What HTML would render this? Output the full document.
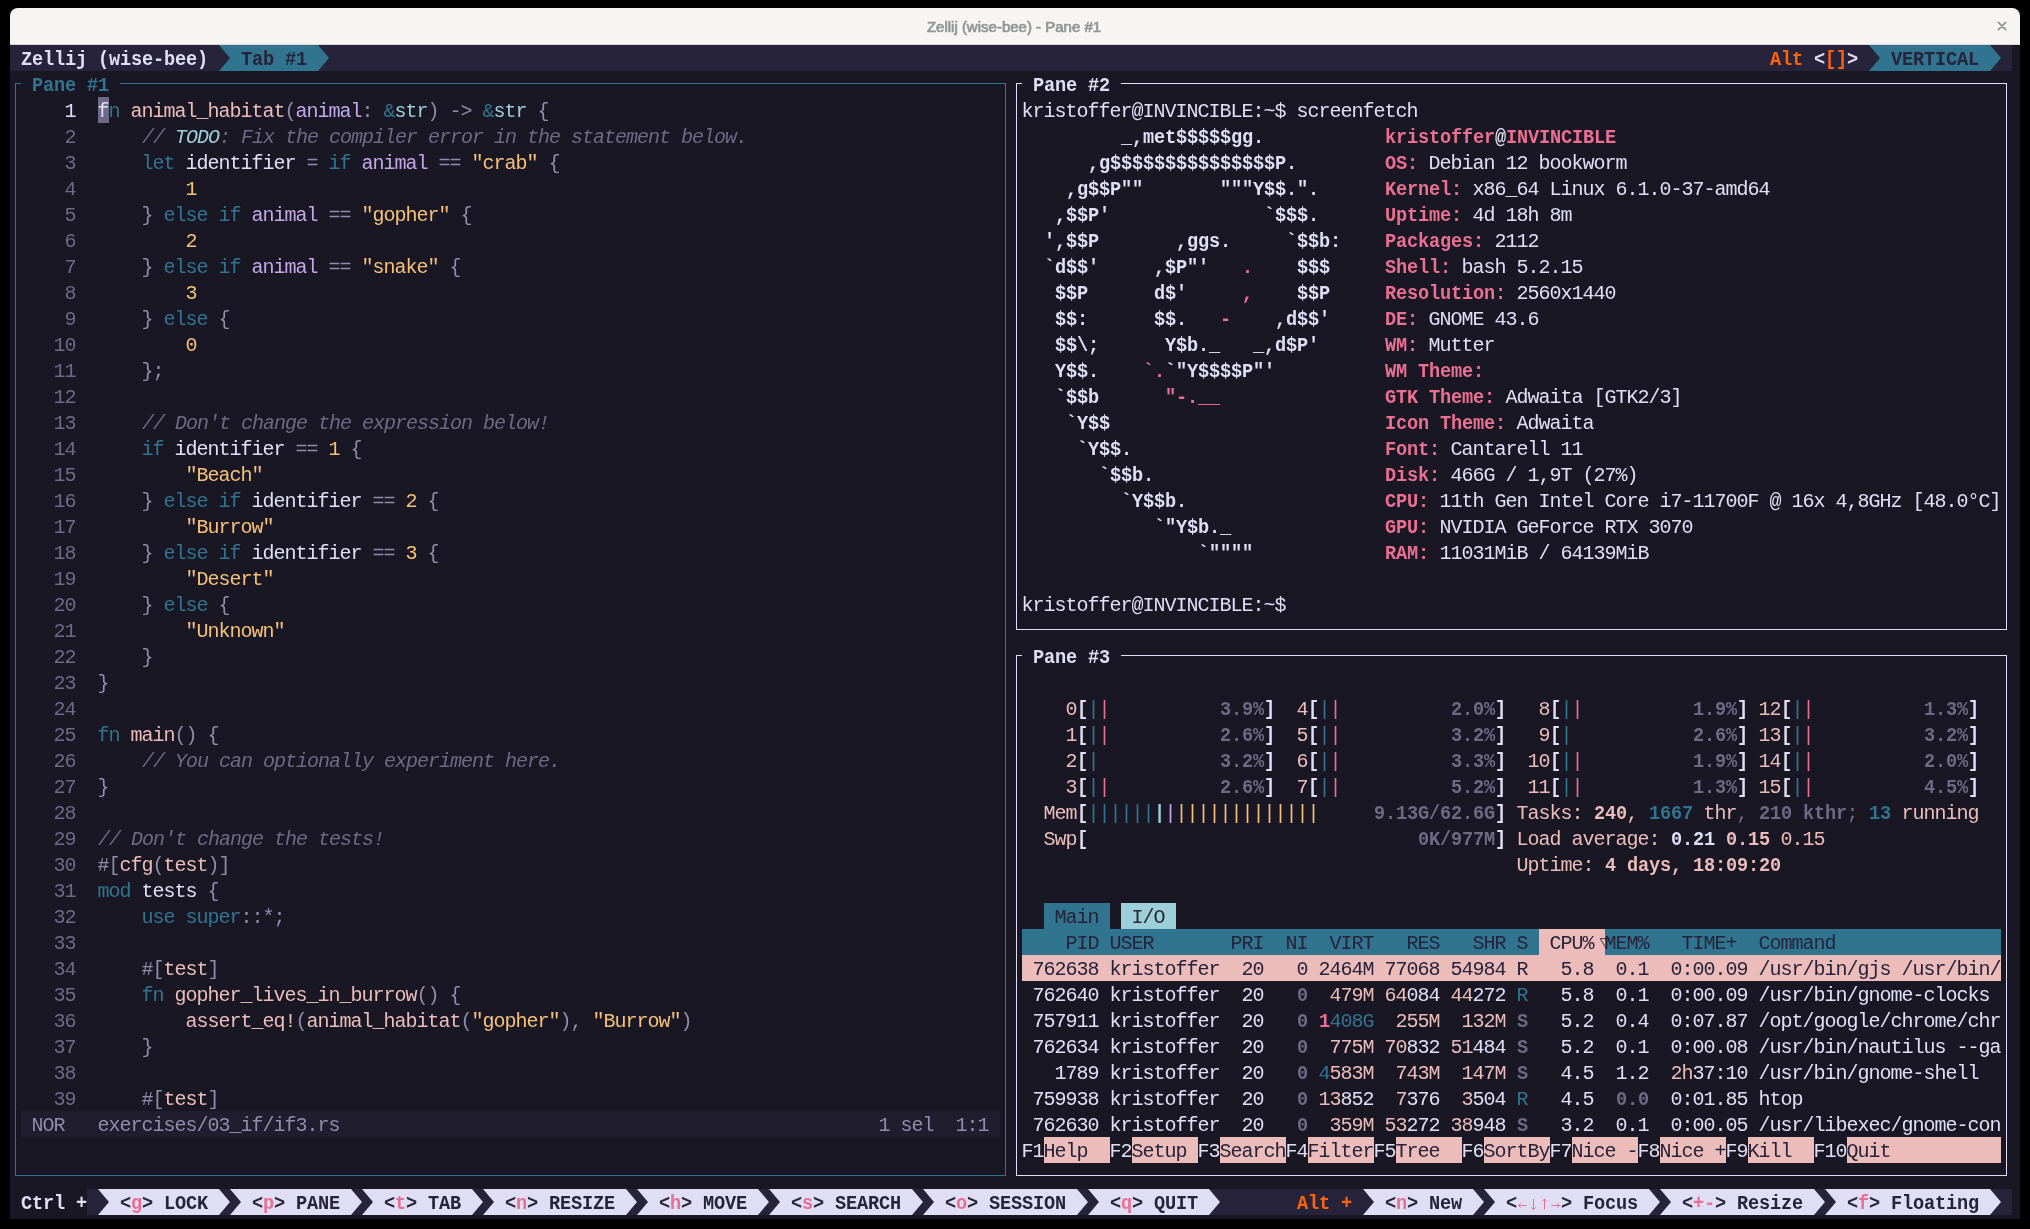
<!DOCTYPE html>
<html><head><meta charset="utf-8"><title>Zellij (wise-bee) - Pane #1</title>
<style>
html,body{margin:0;padding:0;background:#000;}
body{width:2030px;height:1229px;position:relative;overflow:hidden;font-family:"Liberation Mono",monospace;}
#win{position:absolute;left:10px;top:8px;width:2010px;height:1211px;background:#191724;border-radius:8px 8px 0 0;overflow:hidden;}
#tb{position:absolute;left:0;top:0;width:2010px;height:36px;background:#f6f5f4;border-bottom:1px solid #dcd8d1;}
#tt{position:absolute;left:-1px;top:-0.5px;width:2010px;height:37px;line-height:37px;text-align:center;font-family:"Liberation Sans",sans-serif;font-weight:normal;font-size:15px;color:#929595;-webkit-text-stroke:0.7px #929595;will-change:transform;}
#g{position:absolute;left:0;top:0;width:2030px;height:1229px;will-change:transform;}
.r{position:absolute;left:0;height:26px;width:2030px;}
.r span,.r i,.r b{position:absolute;top:2.0px;height:26px;line-height:26px;font-size:20.0px;letter-spacing:-1.0020px;white-space:pre;font-style:normal;font-weight:normal;}
.r b{font-weight:bold;font-size:20.0px;transform:scaleX(0.93);transform-origin:0 0;letter-spacing:-0.1740px;}
.r i{font-style:italic;}
.k{position:absolute;height:26px;}
.a,.l{position:absolute;display:block;}
</style></head><body>
<div id="win"><div id="tb"></div><div id="tt">Zellij (wise-bee) - Pane #1</div><svg style="position:absolute;left:1986px;top:12px" width="12" height="12" viewBox="0 0 12 12"><path d="M2.4 2.4L9.6 9.6M9.6 2.4L2.4 9.6" stroke="#929595" stroke-width="1.8" stroke-linecap="round" fill="none"/></svg></div>
<div id="g">
<div class="k" style="left:10px;top:45px;width:2002px;background:#26233a"></div><div class="k" style="left:230px;top:45px;width:88px;background:#31748f"></div><div class="k" style="left:1880px;top:45px;width:110px;background:#31748f"></div><div class="k" style="left:98px;top:97px;width:11px;background:#6e6a86"></div><div class="k" style="left:21px;top:1111px;width:979px;background:#1f1d2e"></div><div class="k" style="left:1044px;top:903px;width:66px;background:#31748f"></div><div class="k" style="left:1121px;top:903px;width:55px;background:#9ccfd8"></div><div class="k" style="left:1022px;top:929px;width:979px;background:#31748f"></div><div class="k" style="left:1539px;top:929px;width:66px;background:#ebbcba"></div><div class="k" style="left:1022px;top:955px;width:979px;background:#ebbcba"></div><div class="k" style="left:1044px;top:1137px;width:66px;background:#ebbcba"></div><div class="k" style="left:1132px;top:1137px;width:66px;background:#ebbcba"></div><div class="k" style="left:1220px;top:1137px;width:66px;background:#ebbcba"></div><div class="k" style="left:1308px;top:1137px;width:66px;background:#ebbcba"></div><div class="k" style="left:1396px;top:1137px;width:66px;background:#ebbcba"></div><div class="k" style="left:1484px;top:1137px;width:66px;background:#ebbcba"></div><div class="k" style="left:1572px;top:1137px;width:66px;background:#ebbcba"></div><div class="k" style="left:1660px;top:1137px;width:66px;background:#ebbcba"></div><div class="k" style="left:1748px;top:1137px;width:66px;background:#ebbcba"></div><div class="k" style="left:1847px;top:1137px;width:154px;background:#ebbcba"></div><div class="k" style="left:87px;top:1189px;width:1925px;background:#26233a"></div><div class="k" style="left:109px;top:1189px;width:110px;background:#e0def4"></div><div class="k" style="left:241px;top:1189px;width:110px;background:#e0def4"></div><div class="k" style="left:373px;top:1189px;width:99px;background:#e0def4"></div><div class="k" style="left:494px;top:1189px;width:132px;background:#e0def4"></div><div class="k" style="left:648px;top:1189px;width:110px;background:#e0def4"></div><div class="k" style="left:780px;top:1189px;width:132px;background:#e0def4"></div><div class="k" style="left:934px;top:1189px;width:143px;background:#e0def4"></div><div class="k" style="left:1099px;top:1189px;width:110px;background:#e0def4"></div><div class="k" style="left:1374px;top:1189px;width:99px;background:#e0def4"></div><div class="k" style="left:1495px;top:1189px;width:154px;background:#e0def4"></div><div class="k" style="left:1671px;top:1189px;width:143px;background:#e0def4"></div><div class="k" style="left:1836px;top:1189px;width:154px;background:#e0def4"></div>
<svg class="a" style="left:219px;top:45px" width="11" height="26" viewBox="0 0 11 26"><rect width="11" height="26" fill="#31748f"/><path d="M0 0L11 13.0L0 26Z" fill="#26233a"/></svg><svg class="a" style="left:318px;top:45px" width="11" height="26" viewBox="0 0 11 26"><rect width="11" height="26" fill="#26233a"/><path d="M0 0L11 13.0L0 26Z" fill="#31748f"/></svg><svg class="a" style="left:1869px;top:45px" width="11" height="26" viewBox="0 0 11 26"><rect width="11" height="26" fill="#31748f"/><path d="M0 0L11 13.0L0 26Z" fill="#26233a"/></svg><svg class="a" style="left:1990px;top:45px" width="11" height="26" viewBox="0 0 11 26"><rect width="11" height="26" fill="#26233a"/><path d="M0 0L11 13.0L0 26Z" fill="#31748f"/></svg><div class="l" style="left:15px;top:83px;width:6px;height:1px;background:#31748f"></div><div class="l" style="left:120px;top:83px;width:886px;height:1px;background:#31748f"></div><div class="l" style="left:15px;top:1175px;width:991px;height:1px;background:#31748f"></div><div class="l" style="left:15px;top:83px;width:1px;height:1093px;background:#31748f"></div><div class="l" style="left:1005px;top:83px;width:1px;height:1093px;background:#31748f"></div><div class="l" style="left:1016px;top:83px;width:6px;height:1px;background:#e0def4"></div><div class="l" style="left:1121px;top:83px;width:886px;height:1px;background:#e0def4"></div><div class="l" style="left:1016px;top:629px;width:991px;height:1px;background:#e0def4"></div><div class="l" style="left:1016px;top:83px;width:1px;height:547px;background:#e0def4"></div><div class="l" style="left:2006px;top:83px;width:1px;height:547px;background:#e0def4"></div><div class="l" style="left:1016px;top:655px;width:6px;height:1px;background:#e0def4"></div><div class="l" style="left:1121px;top:655px;width:886px;height:1px;background:#e0def4"></div><div class="l" style="left:1016px;top:1175px;width:991px;height:1px;background:#e0def4"></div><div class="l" style="left:1016px;top:655px;width:1px;height:521px;background:#e0def4"></div><div class="l" style="left:2006px;top:655px;width:1px;height:521px;background:#e0def4"></div><svg class="a" style="left:98px;top:1189px" width="11" height="26" viewBox="0 0 11 26"><rect width="11" height="26" fill="#e0def4"/><path d="M0 0L11 13.0L0 26Z" fill="#26233a"/></svg><svg class="a" style="left:219px;top:1189px" width="11" height="26" viewBox="0 0 11 26"><rect width="11" height="26" fill="#26233a"/><path d="M0 0L11 13.0L0 26Z" fill="#e0def4"/></svg><svg class="a" style="left:230px;top:1189px" width="11" height="26" viewBox="0 0 11 26"><rect width="11" height="26" fill="#e0def4"/><path d="M0 0L11 13.0L0 26Z" fill="#26233a"/></svg><svg class="a" style="left:351px;top:1189px" width="11" height="26" viewBox="0 0 11 26"><rect width="11" height="26" fill="#26233a"/><path d="M0 0L11 13.0L0 26Z" fill="#e0def4"/></svg><svg class="a" style="left:362px;top:1189px" width="11" height="26" viewBox="0 0 11 26"><rect width="11" height="26" fill="#e0def4"/><path d="M0 0L11 13.0L0 26Z" fill="#26233a"/></svg><svg class="a" style="left:472px;top:1189px" width="11" height="26" viewBox="0 0 11 26"><rect width="11" height="26" fill="#26233a"/><path d="M0 0L11 13.0L0 26Z" fill="#e0def4"/></svg><svg class="a" style="left:483px;top:1189px" width="11" height="26" viewBox="0 0 11 26"><rect width="11" height="26" fill="#e0def4"/><path d="M0 0L11 13.0L0 26Z" fill="#26233a"/></svg><svg class="a" style="left:626px;top:1189px" width="11" height="26" viewBox="0 0 11 26"><rect width="11" height="26" fill="#26233a"/><path d="M0 0L11 13.0L0 26Z" fill="#e0def4"/></svg><svg class="a" style="left:637px;top:1189px" width="11" height="26" viewBox="0 0 11 26"><rect width="11" height="26" fill="#e0def4"/><path d="M0 0L11 13.0L0 26Z" fill="#26233a"/></svg><svg class="a" style="left:758px;top:1189px" width="11" height="26" viewBox="0 0 11 26"><rect width="11" height="26" fill="#26233a"/><path d="M0 0L11 13.0L0 26Z" fill="#e0def4"/></svg><svg class="a" style="left:769px;top:1189px" width="11" height="26" viewBox="0 0 11 26"><rect width="11" height="26" fill="#e0def4"/><path d="M0 0L11 13.0L0 26Z" fill="#26233a"/></svg><svg class="a" style="left:912px;top:1189px" width="11" height="26" viewBox="0 0 11 26"><rect width="11" height="26" fill="#26233a"/><path d="M0 0L11 13.0L0 26Z" fill="#e0def4"/></svg><svg class="a" style="left:923px;top:1189px" width="11" height="26" viewBox="0 0 11 26"><rect width="11" height="26" fill="#e0def4"/><path d="M0 0L11 13.0L0 26Z" fill="#26233a"/></svg><svg class="a" style="left:1077px;top:1189px" width="11" height="26" viewBox="0 0 11 26"><rect width="11" height="26" fill="#26233a"/><path d="M0 0L11 13.0L0 26Z" fill="#e0def4"/></svg><svg class="a" style="left:1088px;top:1189px" width="11" height="26" viewBox="0 0 11 26"><rect width="11" height="26" fill="#e0def4"/><path d="M0 0L11 13.0L0 26Z" fill="#26233a"/></svg><svg class="a" style="left:1209px;top:1189px" width="11" height="26" viewBox="0 0 11 26"><rect width="11" height="26" fill="#26233a"/><path d="M0 0L11 13.0L0 26Z" fill="#e0def4"/></svg><svg class="a" style="left:1363px;top:1189px" width="11" height="26" viewBox="0 0 11 26"><rect width="11" height="26" fill="#e0def4"/><path d="M0 0L11 13.0L0 26Z" fill="#26233a"/></svg><svg class="a" style="left:1473px;top:1189px" width="11" height="26" viewBox="0 0 11 26"><rect width="11" height="26" fill="#26233a"/><path d="M0 0L11 13.0L0 26Z" fill="#e0def4"/></svg><svg class="a" style="left:1484px;top:1189px" width="11" height="26" viewBox="0 0 11 26"><rect width="11" height="26" fill="#e0def4"/><path d="M0 0L11 13.0L0 26Z" fill="#26233a"/></svg><svg class="a" style="left:1517px;top:1189px" width="11" height="26" viewBox="0 0 11 26"><path d="M9.5 16.5H1.5M3.8 14.2L1.5 16.5L3.8 18.8" fill="none" stroke="#eb6f92" stroke-width="1"/></svg><svg class="a" style="left:1528px;top:1189px" width="11" height="26" viewBox="0 0 11 26"><path d="M5.5 10V20.5M3.2 18.2L5.5 20.5L7.8 18.2" fill="none" stroke="#eb6f92" stroke-width="1"/></svg><svg class="a" style="left:1539px;top:1189px" width="11" height="26" viewBox="0 0 11 26"><path d="M5.5 20.5V10M3.2 12.3L5.5 10L7.8 12.3" fill="none" stroke="#eb6f92" stroke-width="1"/></svg><svg class="a" style="left:1550px;top:1189px" width="11" height="26" viewBox="0 0 11 26"><path d="M1.5 16.5H9.5M7.2 14.2L9.5 16.5L7.2 18.8" fill="none" stroke="#eb6f92" stroke-width="1"/></svg><svg class="a" style="left:1649px;top:1189px" width="11" height="26" viewBox="0 0 11 26"><rect width="11" height="26" fill="#26233a"/><path d="M0 0L11 13.0L0 26Z" fill="#e0def4"/></svg><svg class="a" style="left:1660px;top:1189px" width="11" height="26" viewBox="0 0 11 26"><rect width="11" height="26" fill="#e0def4"/><path d="M0 0L11 13.0L0 26Z" fill="#26233a"/></svg><svg class="a" style="left:1814px;top:1189px" width="11" height="26" viewBox="0 0 11 26"><rect width="11" height="26" fill="#26233a"/><path d="M0 0L11 13.0L0 26Z" fill="#e0def4"/></svg><svg class="a" style="left:1825px;top:1189px" width="11" height="26" viewBox="0 0 11 26"><rect width="11" height="26" fill="#e0def4"/><path d="M0 0L11 13.0L0 26Z" fill="#26233a"/></svg><svg class="a" style="left:1990px;top:1189px" width="11" height="26" viewBox="0 0 11 26"><rect width="11" height="26" fill="#26233a"/><path d="M0 0L11 13.0L0 26Z" fill="#e0def4"/></svg>
<div class="r" style="top:45px"><b style="left:20.92px;color:#e0def4">Zellij</b><b style="left:97.92px;color:#e0def4">(wise-bee)</b><b style="left:240.92px;color:#26233a">Tab</b><b style="left:284.92px;color:#26233a">#1</b><b style="left:1769.92px;color:#fe640b">Alt</b><b style="left:1813.92px;color:#e0def4">&lt;</b><b style="left:1824.92px;color:#fe640b">[]</b><b style="left:1846.92px;color:#e0def4">&gt;</b><b style="left:1890.92px;color:#26233a">VERTICAL</b></div>
<div class="r" style="top:71px"><b style="left:31.92px;color:#31748f">Pane</b><b style="left:86.92px;color:#31748f">#1</b><b style="left:1032.92px;color:#e0def4">Pane</b><b style="left:1087.92px;color:#e0def4">#2</b></div>
<div class="r" style="top:97px"><span style="left:64.50px;color:#e0def4">1</span><span style="left:97.50px;color:#e0def4">f</span><span style="left:108.50px;color:#31748f">n</span><span style="left:130.50px;color:#ebbcba">animal_habitat</span><span style="left:284.50px;color:#908caa">(</span><span style="left:295.50px;color:#c4a7e7">animal</span><span style="left:361.50px;color:#908caa">:</span><span style="left:383.50px;color:#31748f">&amp;</span><span style="left:394.50px;color:#9ccfd8">str</span><span style="left:427.50px;color:#908caa">)</span><span style="left:449.50px;color:#908caa">-&gt;</span><span style="left:482.50px;color:#31748f">&amp;</span><span style="left:493.50px;color:#9ccfd8">str</span><span style="left:537.50px;color:#908caa">{</span><span style="left:1021.50px;color:#e0def4">kristoffer@INVINCIBLE:~$</span><span style="left:1296.50px;color:#e0def4">screenfetch</span></div>
<div class="r" style="top:123px"><span style="left:64.50px;color:#6e6a86">2</span><i style="left:142.00px;color:#6e6a86">//</i><i style="left:175.00px;color:#9ccfd8">TODO</i><i style="left:219.00px;color:#6e6a86">:</i><i style="left:241.00px;color:#6e6a86">Fix</i><i style="left:285.00px;color:#6e6a86">the</i><i style="left:329.00px;color:#6e6a86">compiler</i><i style="left:428.00px;color:#6e6a86">error</i><i style="left:494.00px;color:#6e6a86">in</i><i style="left:527.00px;color:#6e6a86">the</i><i style="left:571.00px;color:#6e6a86">statement</i><i style="left:681.00px;color:#6e6a86">below.</i><b style="left:1120.92px;color:#e0def4">_,met$$$$$gg.</b><b style="left:1384.92px;color:#eb6f92">kristoffer</b><b style="left:1494.92px;color:#e0def4">@</b><b style="left:1505.92px;color:#eb6f92">INVINCIBLE</b></div>
<div class="r" style="top:149px"><span style="left:64.50px;color:#6e6a86">3</span><span style="left:141.50px;color:#31748f">let</span><span style="left:185.50px;color:#e0def4">identifier</span><span style="left:306.50px;color:#908caa">=</span><span style="left:328.50px;color:#31748f">if</span><span style="left:361.50px;color:#c4a7e7">animal</span><span style="left:438.50px;color:#908caa">==</span><span style="left:471.50px;color:#f6c177">"crab"</span><span style="left:548.50px;color:#908caa">{</span><b style="left:1087.92px;color:#e0def4">,g$$$$$$$$$$$$$$$P.</b><b style="left:1384.92px;color:#eb6f92">OS:</b><span style="left:1428.50px;color:#e0def4">Debian</span><span style="left:1505.50px;color:#e0def4">12</span><span style="left:1538.50px;color:#e0def4">bookworm</span></div>
<div class="r" style="top:175px"><span style="left:64.50px;color:#6e6a86">4</span><span style="left:185.50px;color:#f6c177">1</span><b style="left:1065.92px;color:#e0def4">,g$$P""</b><b style="left:1219.92px;color:#e0def4">"""Y$$.".</b><b style="left:1384.92px;color:#eb6f92">Kernel:</b><span style="left:1472.50px;color:#e0def4">x86_64</span><span style="left:1549.50px;color:#e0def4">Linux</span><span style="left:1615.50px;color:#e0def4">6.1.0-37-amd64</span></div>
<div class="r" style="top:201px"><span style="left:64.50px;color:#6e6a86">5</span><span style="left:141.50px;color:#908caa">}</span><span style="left:163.50px;color:#31748f">else</span><span style="left:218.50px;color:#31748f">if</span><span style="left:251.50px;color:#c4a7e7">animal</span><span style="left:328.50px;color:#908caa">==</span><span style="left:361.50px;color:#f6c177">"gopher"</span><span style="left:460.50px;color:#908caa">{</span><b style="left:1054.92px;color:#e0def4">,$$P'</b><b style="left:1263.92px;color:#e0def4">`$$$.</b><b style="left:1384.92px;color:#eb6f92">Uptime:</b><span style="left:1472.50px;color:#e0def4">4d</span><span style="left:1505.50px;color:#e0def4">18h</span><span style="left:1549.50px;color:#e0def4">8m</span></div>
<div class="r" style="top:227px"><span style="left:64.50px;color:#6e6a86">6</span><span style="left:185.50px;color:#f6c177">2</span><b style="left:1043.92px;color:#e0def4">',$$P</b><b style="left:1175.92px;color:#e0def4">,ggs.</b><b style="left:1285.92px;color:#e0def4">`$$b:</b><b style="left:1384.92px;color:#eb6f92">Packages:</b><span style="left:1494.50px;color:#e0def4">2112</span></div>
<div class="r" style="top:253px"><span style="left:64.50px;color:#6e6a86">7</span><span style="left:141.50px;color:#908caa">}</span><span style="left:163.50px;color:#31748f">else</span><span style="left:218.50px;color:#31748f">if</span><span style="left:251.50px;color:#c4a7e7">animal</span><span style="left:328.50px;color:#908caa">==</span><span style="left:361.50px;color:#f6c177">"snake"</span><span style="left:449.50px;color:#908caa">{</span><b style="left:1043.92px;color:#e0def4">`d$$'</b><b style="left:1153.92px;color:#e0def4">,$P"'</b><b style="left:1241.92px;color:#eb6f92">.</b><b style="left:1296.92px;color:#e0def4">$$$</b><b style="left:1384.92px;color:#eb6f92">Shell:</b><span style="left:1461.50px;color:#e0def4">bash</span><span style="left:1516.50px;color:#e0def4">5.2.15</span></div>
<div class="r" style="top:279px"><span style="left:64.50px;color:#6e6a86">8</span><span style="left:185.50px;color:#f6c177">3</span><b style="left:1054.92px;color:#e0def4">$$P</b><b style="left:1153.92px;color:#e0def4">d$'</b><b style="left:1241.92px;color:#eb6f92">,</b><b style="left:1296.92px;color:#e0def4">$$P</b><b style="left:1384.92px;color:#eb6f92">Resolution:</b><span style="left:1516.50px;color:#e0def4">2560x1440</span></div>
<div class="r" style="top:305px"><span style="left:64.50px;color:#6e6a86">9</span><span style="left:141.50px;color:#908caa">}</span><span style="left:163.50px;color:#31748f">else</span><span style="left:218.50px;color:#908caa">{</span><b style="left:1054.92px;color:#e0def4">$$:</b><b style="left:1153.92px;color:#e0def4">$$.</b><b style="left:1219.92px;color:#eb6f92">-</b><b style="left:1274.92px;color:#e0def4">,d$$'</b><b style="left:1384.92px;color:#eb6f92">DE:</b><span style="left:1428.50px;color:#e0def4">GNOME</span><span style="left:1494.50px;color:#e0def4">43.6</span></div>
<div class="r" style="top:331px"><span style="left:53.50px;color:#6e6a86">10</span><span style="left:185.50px;color:#f6c177">0</span><b style="left:1054.92px;color:#e0def4">$$\;</b><b style="left:1164.92px;color:#e0def4">Y$b._</b><b style="left:1252.92px;color:#e0def4">_,d$P'</b><b style="left:1384.92px;color:#eb6f92">WM:</b><span style="left:1428.50px;color:#e0def4">Mutter</span></div>
<div class="r" style="top:357px"><span style="left:53.50px;color:#6e6a86">11</span><span style="left:141.50px;color:#908caa">};</span><b style="left:1054.92px;color:#e0def4">Y$$.</b><b style="left:1142.92px;color:#eb6f92">`.</b><b style="left:1164.92px;color:#e0def4">`"Y$$$$P"'</b><b style="left:1384.92px;color:#eb6f92">WM</b><b style="left:1417.92px;color:#eb6f92">Theme:</b></div>
<div class="r" style="top:383px"><span style="left:53.50px;color:#6e6a86">12</span><b style="left:1054.92px;color:#e0def4">`$$b</b><b style="left:1164.92px;color:#eb6f92">"-.__</b><b style="left:1384.92px;color:#eb6f92">GTK</b><b style="left:1428.92px;color:#eb6f92">Theme:</b><span style="left:1505.50px;color:#e0def4">Adwaita</span><span style="left:1593.50px;color:#e0def4">[GTK2/3]</span></div>
<div class="r" style="top:409px"><span style="left:53.50px;color:#6e6a86">13</span><i style="left:142.00px;color:#6e6a86">//</i><i style="left:175.00px;color:#6e6a86">Don't</i><i style="left:241.00px;color:#6e6a86">change</i><i style="left:318.00px;color:#6e6a86">the</i><i style="left:362.00px;color:#6e6a86">expression</i><i style="left:483.00px;color:#6e6a86">below!</i><b style="left:1065.92px;color:#e0def4">`Y$$</b><b style="left:1384.92px;color:#eb6f92">Icon</b><b style="left:1439.92px;color:#eb6f92">Theme:</b><span style="left:1516.50px;color:#e0def4">Adwaita</span></div>
<div class="r" style="top:435px"><span style="left:53.50px;color:#6e6a86">14</span><span style="left:141.50px;color:#31748f">if</span><span style="left:174.50px;color:#e0def4">identifier</span><span style="left:295.50px;color:#908caa">==</span><span style="left:328.50px;color:#f6c177">1</span><span style="left:350.50px;color:#908caa">{</span><b style="left:1076.92px;color:#e0def4">`Y$$.</b><b style="left:1384.92px;color:#eb6f92">Font:</b><span style="left:1450.50px;color:#e0def4">Cantarell</span><span style="left:1560.50px;color:#e0def4">11</span></div>
<div class="r" style="top:461px"><span style="left:53.50px;color:#6e6a86">15</span><span style="left:185.50px;color:#f6c177">"Beach"</span><b style="left:1098.92px;color:#e0def4">`$$b.</b><b style="left:1384.92px;color:#eb6f92">Disk:</b><span style="left:1450.50px;color:#e0def4">466G</span><span style="left:1505.50px;color:#e0def4">/</span><span style="left:1527.50px;color:#e0def4">1,9T</span><span style="left:1582.50px;color:#e0def4">(27%)</span></div>
<div class="r" style="top:487px"><span style="left:53.50px;color:#6e6a86">16</span><span style="left:141.50px;color:#908caa">}</span><span style="left:163.50px;color:#31748f">else</span><span style="left:218.50px;color:#31748f">if</span><span style="left:251.50px;color:#e0def4">identifier</span><span style="left:372.50px;color:#908caa">==</span><span style="left:405.50px;color:#f6c177">2</span><span style="left:427.50px;color:#908caa">{</span><b style="left:1120.92px;color:#e0def4">`Y$$b.</b><b style="left:1384.92px;color:#eb6f92">CPU:</b><span style="left:1439.50px;color:#e0def4">11th</span><span style="left:1494.50px;color:#e0def4">Gen</span><span style="left:1538.50px;color:#e0def4">Intel</span><span style="left:1604.50px;color:#e0def4">Core</span><span style="left:1659.50px;color:#e0def4">i7-11700F</span><span style="left:1769.50px;color:#e0def4">@</span><span style="left:1791.50px;color:#e0def4">16x</span><span style="left:1835.50px;color:#e0def4">4,8GHz</span><span style="left:1912.50px;color:#e0def4">[48.0°C]</span></div>
<div class="r" style="top:513px"><span style="left:53.50px;color:#6e6a86">17</span><span style="left:185.50px;color:#f6c177">"Burrow"</span><b style="left:1153.92px;color:#e0def4">`"Y$b._</b><b style="left:1384.92px;color:#eb6f92">GPU:</b><span style="left:1439.50px;color:#e0def4">NVIDIA</span><span style="left:1516.50px;color:#e0def4">GeForce</span><span style="left:1604.50px;color:#e0def4">RTX</span><span style="left:1648.50px;color:#e0def4">3070</span></div>
<div class="r" style="top:539px"><span style="left:53.50px;color:#6e6a86">18</span><span style="left:141.50px;color:#908caa">}</span><span style="left:163.50px;color:#31748f">else</span><span style="left:218.50px;color:#31748f">if</span><span style="left:251.50px;color:#e0def4">identifier</span><span style="left:372.50px;color:#908caa">==</span><span style="left:405.50px;color:#f6c177">3</span><span style="left:427.50px;color:#908caa">{</span><b style="left:1197.92px;color:#e0def4">`""""</b><b style="left:1384.92px;color:#eb6f92">RAM:</b><span style="left:1439.50px;color:#e0def4">11031MiB</span><span style="left:1538.50px;color:#e0def4">/</span><span style="left:1560.50px;color:#e0def4">64139MiB</span></div>
<div class="r" style="top:565px"><span style="left:53.50px;color:#6e6a86">19</span><span style="left:185.50px;color:#f6c177">"Desert"</span></div>
<div class="r" style="top:591px"><span style="left:53.50px;color:#6e6a86">20</span><span style="left:141.50px;color:#908caa">}</span><span style="left:163.50px;color:#31748f">else</span><span style="left:218.50px;color:#908caa">{</span><span style="left:1021.50px;color:#e0def4">kristoffer@INVINCIBLE:~$</span></div>
<div class="r" style="top:617px"><span style="left:53.50px;color:#6e6a86">21</span><span style="left:185.50px;color:#f6c177">"Unknown"</span></div>
<div class="r" style="top:643px"><span style="left:53.50px;color:#6e6a86">22</span><span style="left:141.50px;color:#908caa">}</span><b style="left:1032.92px;color:#e0def4">Pane</b><b style="left:1087.92px;color:#e0def4">#3</b></div>
<div class="r" style="top:669px"><span style="left:53.50px;color:#6e6a86">23</span><span style="left:97.50px;color:#908caa">}</span></div>
<div class="r" style="top:695px"><span style="left:53.50px;color:#6e6a86">24</span><span style="left:1065.50px;color:#ebbcba">0</span><b style="left:1076.92px;color:#e0def4">[</b><span style="left:1087.50px;color:#31748f">|</span><span style="left:1098.50px;color:#eb6f92">|</span><b style="left:1219.92px;color:#6e6a86">3.9%</b><b style="left:1263.92px;color:#e0def4">]</b><span style="left:1296.50px;color:#ebbcba">4</span><b style="left:1307.92px;color:#e0def4">[</b><span style="left:1318.50px;color:#31748f">|</span><span style="left:1329.50px;color:#eb6f92">|</span><b style="left:1450.92px;color:#6e6a86">2.0%</b><b style="left:1494.92px;color:#e0def4">]</b><span style="left:1538.50px;color:#ebbcba">8</span><b style="left:1549.92px;color:#e0def4">[</b><span style="left:1560.50px;color:#31748f">|</span><span style="left:1571.50px;color:#eb6f92">|</span><b style="left:1692.92px;color:#6e6a86">1.9%</b><b style="left:1736.92px;color:#e0def4">]</b><span style="left:1758.50px;color:#ebbcba">12</span><b style="left:1780.92px;color:#e0def4">[</b><span style="left:1791.50px;color:#31748f">|</span><span style="left:1802.50px;color:#eb6f92">|</span><b style="left:1923.92px;color:#6e6a86">1.3%</b><b style="left:1967.92px;color:#e0def4">]</b></div>
<div class="r" style="top:721px"><span style="left:53.50px;color:#6e6a86">25</span><span style="left:97.50px;color:#31748f">fn</span><span style="left:130.50px;color:#ebbcba">main</span><span style="left:174.50px;color:#908caa">()</span><span style="left:207.50px;color:#908caa">{</span><span style="left:1065.50px;color:#ebbcba">1</span><b style="left:1076.92px;color:#e0def4">[</b><span style="left:1087.50px;color:#31748f">|</span><span style="left:1098.50px;color:#eb6f92">|</span><b style="left:1219.92px;color:#6e6a86">2.6%</b><b style="left:1263.92px;color:#e0def4">]</b><span style="left:1296.50px;color:#ebbcba">5</span><b style="left:1307.92px;color:#e0def4">[</b><span style="left:1318.50px;color:#31748f">|</span><span style="left:1329.50px;color:#eb6f92">|</span><b style="left:1450.92px;color:#6e6a86">3.2%</b><b style="left:1494.92px;color:#e0def4">]</b><span style="left:1538.50px;color:#ebbcba">9</span><b style="left:1549.92px;color:#e0def4">[</b><span style="left:1560.50px;color:#31748f">|</span><b style="left:1692.92px;color:#6e6a86">2.6%</b><b style="left:1736.92px;color:#e0def4">]</b><span style="left:1758.50px;color:#ebbcba">13</span><b style="left:1780.92px;color:#e0def4">[</b><span style="left:1791.50px;color:#31748f">|</span><span style="left:1802.50px;color:#eb6f92">|</span><b style="left:1923.92px;color:#6e6a86">3.2%</b><b style="left:1967.92px;color:#e0def4">]</b></div>
<div class="r" style="top:747px"><span style="left:53.50px;color:#6e6a86">26</span><i style="left:142.00px;color:#6e6a86">//</i><i style="left:175.00px;color:#6e6a86">You</i><i style="left:219.00px;color:#6e6a86">can</i><i style="left:263.00px;color:#6e6a86">optionally</i><i style="left:384.00px;color:#6e6a86">experiment</i><i style="left:505.00px;color:#6e6a86">here.</i><span style="left:1065.50px;color:#ebbcba">2</span><b style="left:1076.92px;color:#e0def4">[</b><span style="left:1087.50px;color:#31748f">|</span><b style="left:1219.92px;color:#6e6a86">3.2%</b><b style="left:1263.92px;color:#e0def4">]</b><span style="left:1296.50px;color:#ebbcba">6</span><b style="left:1307.92px;color:#e0def4">[</b><span style="left:1318.50px;color:#31748f">|</span><span style="left:1329.50px;color:#eb6f92">|</span><b style="left:1450.92px;color:#6e6a86">3.3%</b><b style="left:1494.92px;color:#e0def4">]</b><span style="left:1527.50px;color:#ebbcba">10</span><b style="left:1549.92px;color:#e0def4">[</b><span style="left:1560.50px;color:#31748f">|</span><span style="left:1571.50px;color:#eb6f92">|</span><b style="left:1692.92px;color:#6e6a86">1.9%</b><b style="left:1736.92px;color:#e0def4">]</b><span style="left:1758.50px;color:#ebbcba">14</span><b style="left:1780.92px;color:#e0def4">[</b><span style="left:1791.50px;color:#31748f">|</span><span style="left:1802.50px;color:#eb6f92">|</span><b style="left:1923.92px;color:#6e6a86">2.0%</b><b style="left:1967.92px;color:#e0def4">]</b></div>
<div class="r" style="top:773px"><span style="left:53.50px;color:#6e6a86">27</span><span style="left:97.50px;color:#908caa">}</span><span style="left:1065.50px;color:#ebbcba">3</span><b style="left:1076.92px;color:#e0def4">[</b><span style="left:1087.50px;color:#31748f">|</span><span style="left:1098.50px;color:#eb6f92">|</span><b style="left:1219.92px;color:#6e6a86">2.6%</b><b style="left:1263.92px;color:#e0def4">]</b><span style="left:1296.50px;color:#ebbcba">7</span><b style="left:1307.92px;color:#e0def4">[</b><span style="left:1318.50px;color:#31748f">|</span><span style="left:1329.50px;color:#eb6f92">|</span><b style="left:1450.92px;color:#6e6a86">5.2%</b><b style="left:1494.92px;color:#e0def4">]</b><span style="left:1527.50px;color:#ebbcba">11</span><b style="left:1549.92px;color:#e0def4">[</b><span style="left:1560.50px;color:#31748f">|</span><span style="left:1571.50px;color:#eb6f92">|</span><b style="left:1692.92px;color:#6e6a86">1.3%</b><b style="left:1736.92px;color:#e0def4">]</b><span style="left:1758.50px;color:#ebbcba">15</span><b style="left:1780.92px;color:#e0def4">[</b><span style="left:1791.50px;color:#31748f">|</span><span style="left:1802.50px;color:#eb6f92">|</span><b style="left:1923.92px;color:#6e6a86">4.5%</b><b style="left:1967.92px;color:#e0def4">]</b></div>
<div class="r" style="top:799px"><span style="left:53.50px;color:#6e6a86">28</span><span style="left:1043.50px;color:#ebbcba">Mem</span><b style="left:1076.92px;color:#e0def4">[</b><span style="left:1087.50px;color:#31748f">||||||</span><b style="left:1153.92px;color:#9ccfd8">|</b><span style="left:1164.50px;color:#c4a7e7">|</span><span style="left:1175.50px;color:#f6c177">|||||||||||||</span><b style="left:1373.92px;color:#6e6a86">9.13G/62.6G</b><b style="left:1494.92px;color:#e0def4">]</b><span style="left:1516.50px;color:#ebbcba">Tasks:</span><b style="left:1593.92px;color:#ebbcba">240</b><span style="left:1626.50px;color:#ebbcba">,</span><b style="left:1648.92px;color:#31748f">1667</b><span style="left:1703.50px;color:#ebbcba">thr</span><span style="left:1736.50px;color:#6e6a86">,</span><b style="left:1758.92px;color:#6e6a86">210</b><b style="left:1802.92px;color:#6e6a86">kthr</b><span style="left:1846.50px;color:#6e6a86">;</span><b style="left:1868.92px;color:#31748f">13</b><span style="left:1901.50px;color:#ebbcba">running</span></div>
<div class="r" style="top:825px"><span style="left:53.50px;color:#6e6a86">29</span><i style="left:98.00px;color:#6e6a86">//</i><i style="left:131.00px;color:#6e6a86">Don't</i><i style="left:197.00px;color:#6e6a86">change</i><i style="left:274.00px;color:#6e6a86">the</i><i style="left:318.00px;color:#6e6a86">tests!</i><span style="left:1043.50px;color:#ebbcba">Swp</span><b style="left:1076.92px;color:#e0def4">[</b><b style="left:1417.92px;color:#6e6a86">0K/977M</b><b style="left:1494.92px;color:#e0def4">]</b><span style="left:1516.50px;color:#ebbcba">Load</span><span style="left:1571.50px;color:#ebbcba">average:</span><b style="left:1670.92px;color:#e0def4">0.21</b><b style="left:1725.92px;color:#ebbcba">0.15</b><span style="left:1780.50px;color:#ebbcba">0.15</span></div>
<div class="r" style="top:851px"><span style="left:53.50px;color:#6e6a86">30</span><span style="left:97.50px;color:#908caa">#[</span><span style="left:119.50px;color:#ebbcba">cfg</span><span style="left:152.50px;color:#908caa">(</span><span style="left:163.50px;color:#ebbcba">test</span><span style="left:207.50px;color:#908caa">)]</span><span style="left:1516.50px;color:#ebbcba">Uptime:</span><b style="left:1604.92px;color:#ebbcba">4</b><b style="left:1626.92px;color:#ebbcba">days,</b><b style="left:1692.92px;color:#ebbcba">18:09:20</b></div>
<div class="r" style="top:877px"><span style="left:53.50px;color:#6e6a86">31</span><span style="left:97.50px;color:#31748f">mod</span><span style="left:141.50px;color:#e0def4">tests</span><span style="left:207.50px;color:#908caa">{</span></div>
<div class="r" style="top:903px"><span style="left:53.50px;color:#6e6a86">32</span><span style="left:141.50px;color:#31748f">use</span><span style="left:185.50px;color:#31748f">super</span><span style="left:240.50px;color:#908caa">::*;</span><span style="left:1054.50px;color:#26233a">Main</span><span style="left:1131.50px;color:#26233a">I/O</span></div>
<div class="r" style="top:929px"><span style="left:53.50px;color:#6e6a86">33</span><span style="left:1065.50px;color:#26233a">PID</span><span style="left:1109.50px;color:#26233a">USER</span><span style="left:1230.50px;color:#26233a">PRI</span><span style="left:1285.50px;color:#26233a">NI</span><span style="left:1329.50px;color:#26233a">VIRT</span><span style="left:1406.50px;color:#26233a">RES</span><span style="left:1472.50px;color:#26233a">SHR</span><span style="left:1516.50px;color:#26233a">S</span><span style="left:1549.50px;color:#26233a">CPU%</span><span style="left:1604.50px;color:#26233a">MEM%</span><span style="left:1681.50px;color:#26233a">TIME+</span><span style="left:1758.50px;color:#26233a">Command</span></div>
<div class="r" style="top:955px"><span style="left:53.50px;color:#6e6a86">34</span><span style="left:141.50px;color:#908caa">#[</span><span style="left:163.50px;color:#ebbcba">test</span><span style="left:207.50px;color:#908caa">]</span><span style="left:1032.50px;color:#26233a">762638</span><span style="left:1109.50px;color:#26233a">kristoffer</span><span style="left:1241.50px;color:#26233a">20</span><span style="left:1296.50px;color:#26233a">0</span><span style="left:1318.50px;color:#26233a">2464M</span><span style="left:1384.50px;color:#26233a">77068</span><span style="left:1450.50px;color:#26233a">54984</span><span style="left:1516.50px;color:#26233a">R</span><span style="left:1560.50px;color:#26233a">5.8</span><span style="left:1615.50px;color:#26233a">0.1</span><span style="left:1670.50px;color:#26233a">0:00.09</span><span style="left:1758.50px;color:#26233a">/usr/bin/gjs</span><span style="left:1901.50px;color:#26233a">/usr/bin/</span></div>
<div class="r" style="top:981px"><span style="left:53.50px;color:#6e6a86">35</span><span style="left:141.50px;color:#31748f">fn</span><span style="left:174.50px;color:#ebbcba">gopher_lives_in_burrow</span><span style="left:416.50px;color:#908caa">()</span><span style="left:449.50px;color:#908caa">{</span><span style="left:1032.50px;color:#e0def4">762640</span><span style="left:1109.50px;color:#e0def4">kristoffer</span><span style="left:1241.50px;color:#e0def4">20</span><b style="left:1296.92px;color:#6e6a86">0</b><span style="left:1329.50px;color:#ebbcba">479M</span><span style="left:1384.50px;color:#ebbcba">64</span><span style="left:1406.50px;color:#e0def4">084</span><span style="left:1450.50px;color:#ebbcba">44</span><span style="left:1472.50px;color:#e0def4">272</span><span style="left:1516.50px;color:#31748f">R</span><span style="left:1560.50px;color:#e0def4">5.8</span><span style="left:1615.50px;color:#e0def4">0.1</span><span style="left:1670.50px;color:#e0def4">0:00.09</span><span style="left:1758.50px;color:#e0def4">/usr/bin/gnome-clocks</span></div>
<div class="r" style="top:1007px"><span style="left:53.50px;color:#6e6a86">36</span><span style="left:185.50px;color:#ebbcba">assert_eq!</span><span style="left:295.50px;color:#908caa">(</span><span style="left:306.50px;color:#ebbcba">animal_habitat</span><span style="left:460.50px;color:#908caa">(</span><span style="left:471.50px;color:#f6c177">"gopher"</span><span style="left:559.50px;color:#908caa">),</span><span style="left:592.50px;color:#f6c177">"Burrow"</span><span style="left:680.50px;color:#908caa">)</span><span style="left:1032.50px;color:#e0def4">757911</span><span style="left:1109.50px;color:#e0def4">kristoffer</span><span style="left:1241.50px;color:#e0def4">20</span><b style="left:1296.92px;color:#6e6a86">0</b><b style="left:1318.92px;color:#eb6f92">1</b><span style="left:1329.50px;color:#31748f">408G</span><span style="left:1395.50px;color:#ebbcba">255M</span><span style="left:1461.50px;color:#ebbcba">132M</span><b style="left:1516.92px;color:#6e6a86">S</b><span style="left:1560.50px;color:#e0def4">5.2</span><span style="left:1615.50px;color:#e0def4">0.4</span><span style="left:1670.50px;color:#e0def4">0:07.87</span><span style="left:1758.50px;color:#e0def4">/opt/google/chrome/chr</span></div>
<div class="r" style="top:1033px"><span style="left:53.50px;color:#6e6a86">37</span><span style="left:141.50px;color:#908caa">}</span><span style="left:1032.50px;color:#e0def4">762634</span><span style="left:1109.50px;color:#e0def4">kristoffer</span><span style="left:1241.50px;color:#e0def4">20</span><b style="left:1296.92px;color:#6e6a86">0</b><span style="left:1329.50px;color:#ebbcba">775M</span><span style="left:1384.50px;color:#ebbcba">70</span><span style="left:1406.50px;color:#e0def4">832</span><span style="left:1450.50px;color:#ebbcba">51</span><span style="left:1472.50px;color:#e0def4">484</span><b style="left:1516.92px;color:#6e6a86">S</b><span style="left:1560.50px;color:#e0def4">5.2</span><span style="left:1615.50px;color:#e0def4">0.1</span><span style="left:1670.50px;color:#e0def4">0:00.08</span><span style="left:1758.50px;color:#e0def4">/usr/bin/nautilus</span><span style="left:1956.50px;color:#e0def4">--ga</span></div>
<div class="r" style="top:1059px"><span style="left:53.50px;color:#6e6a86">38</span><span style="left:1054.50px;color:#e0def4">1789</span><span style="left:1109.50px;color:#e0def4">kristoffer</span><span style="left:1241.50px;color:#e0def4">20</span><b style="left:1296.92px;color:#6e6a86">0</b><span style="left:1318.50px;color:#31748f">4</span><span style="left:1329.50px;color:#ebbcba">583M</span><span style="left:1395.50px;color:#ebbcba">743M</span><span style="left:1461.50px;color:#ebbcba">147M</span><b style="left:1516.92px;color:#6e6a86">S</b><span style="left:1560.50px;color:#e0def4">4.5</span><span style="left:1615.50px;color:#e0def4">1.2</span><span style="left:1670.50px;color:#ebbcba">2h</span><span style="left:1692.50px;color:#e0def4">37:10</span><span style="left:1758.50px;color:#e0def4">/usr/bin/gnome-shell</span></div>
<div class="r" style="top:1085px"><span style="left:53.50px;color:#6e6a86">39</span><span style="left:141.50px;color:#908caa">#[</span><span style="left:163.50px;color:#ebbcba">test</span><span style="left:207.50px;color:#908caa">]</span><span style="left:1032.50px;color:#e0def4">759938</span><span style="left:1109.50px;color:#e0def4">kristoffer</span><span style="left:1241.50px;color:#e0def4">20</span><b style="left:1296.92px;color:#6e6a86">0</b><span style="left:1318.50px;color:#ebbcba">13</span><span style="left:1340.50px;color:#e0def4">852</span><span style="left:1395.50px;color:#ebbcba">7</span><span style="left:1406.50px;color:#e0def4">376</span><span style="left:1461.50px;color:#ebbcba">3</span><span style="left:1472.50px;color:#e0def4">504</span><span style="left:1516.50px;color:#31748f">R</span><span style="left:1560.50px;color:#e0def4">4.5</span><b style="left:1615.92px;color:#6e6a86">0.0</b><span style="left:1670.50px;color:#e0def4">0:01.85</span><span style="left:1758.50px;color:#e0def4">htop</span></div>
<div class="r" style="top:1111px"><span style="left:31.50px;color:#908caa">NOR</span><span style="left:97.50px;color:#908caa">exercises/03_if/if3.rs</span><span style="left:878.50px;color:#908caa">1</span><span style="left:900.50px;color:#908caa">sel</span><span style="left:955.50px;color:#908caa">1:1</span><span style="left:1032.50px;color:#e0def4">762630</span><span style="left:1109.50px;color:#e0def4">kristoffer</span><span style="left:1241.50px;color:#e0def4">20</span><b style="left:1296.92px;color:#6e6a86">0</b><span style="left:1329.50px;color:#ebbcba">359M</span><span style="left:1384.50px;color:#ebbcba">53</span><span style="left:1406.50px;color:#e0def4">272</span><span style="left:1450.50px;color:#ebbcba">38</span><span style="left:1472.50px;color:#e0def4">948</span><b style="left:1516.92px;color:#6e6a86">S</b><span style="left:1560.50px;color:#e0def4">3.2</span><span style="left:1615.50px;color:#e0def4">0.1</span><span style="left:1670.50px;color:#e0def4">0:00.05</span><span style="left:1758.50px;color:#e0def4">/usr/libexec/gnome-con</span></div>
<div class="r" style="top:1137px"><span style="left:1021.50px;color:#e0def4">F1</span><span style="left:1043.50px;color:#26233a">Help</span><span style="left:1109.50px;color:#e0def4">F2</span><span style="left:1131.50px;color:#26233a">Setup</span><span style="left:1197.50px;color:#e0def4">F3</span><span style="left:1219.50px;color:#26233a">Search</span><span style="left:1285.50px;color:#e0def4">F4</span><span style="left:1307.50px;color:#26233a">Filter</span><span style="left:1373.50px;color:#e0def4">F5</span><span style="left:1395.50px;color:#26233a">Tree</span><span style="left:1461.50px;color:#e0def4">F6</span><span style="left:1483.50px;color:#26233a">SortBy</span><span style="left:1549.50px;color:#e0def4">F7</span><span style="left:1571.50px;color:#26233a">Nice</span><span style="left:1626.50px;color:#26233a">-</span><span style="left:1637.50px;color:#e0def4">F8</span><span style="left:1659.50px;color:#26233a">Nice</span><span style="left:1714.50px;color:#26233a">+</span><span style="left:1725.50px;color:#e0def4">F9</span><span style="left:1747.50px;color:#26233a">Kill</span><span style="left:1813.50px;color:#e0def4">F10</span><span style="left:1846.50px;color:#26233a">Quit</span></div>
<div class="r" style="top:1189px"><b style="left:20.92px;color:#e0def4">Ctrl</b><b style="left:75.92px;color:#e0def4">+</b><b style="left:119.92px;color:#26233a">&lt;</b><b style="left:130.92px;color:#eb6f92">g</b><b style="left:141.92px;color:#26233a">&gt;</b><b style="left:163.92px;color:#26233a">LOCK</b><b style="left:251.92px;color:#26233a">&lt;</b><b style="left:262.92px;color:#eb6f92">p</b><b style="left:273.92px;color:#26233a">&gt;</b><b style="left:295.92px;color:#26233a">PANE</b><b style="left:383.92px;color:#26233a">&lt;</b><b style="left:394.92px;color:#eb6f92">t</b><b style="left:405.92px;color:#26233a">&gt;</b><b style="left:427.92px;color:#26233a">TAB</b><b style="left:504.92px;color:#26233a">&lt;</b><b style="left:515.92px;color:#eb6f92">n</b><b style="left:526.92px;color:#26233a">&gt;</b><b style="left:548.92px;color:#26233a">RESIZE</b><b style="left:658.92px;color:#26233a">&lt;</b><b style="left:669.92px;color:#eb6f92">h</b><b style="left:680.92px;color:#26233a">&gt;</b><b style="left:702.92px;color:#26233a">MOVE</b><b style="left:790.92px;color:#26233a">&lt;</b><b style="left:801.92px;color:#eb6f92">s</b><b style="left:812.92px;color:#26233a">&gt;</b><b style="left:834.92px;color:#26233a">SEARCH</b><b style="left:944.92px;color:#26233a">&lt;</b><b style="left:955.92px;color:#eb6f92">o</b><b style="left:966.92px;color:#26233a">&gt;</b><b style="left:988.92px;color:#26233a">SESSION</b><b style="left:1109.92px;color:#26233a">&lt;</b><b style="left:1120.92px;color:#eb6f92">q</b><b style="left:1131.92px;color:#26233a">&gt;</b><b style="left:1153.92px;color:#26233a">QUIT</b><b style="left:1296.92px;color:#fe640b">Alt</b><b style="left:1340.92px;color:#fe640b">+</b><b style="left:1384.92px;color:#26233a">&lt;</b><b style="left:1395.92px;color:#eb6f92">n</b><b style="left:1406.92px;color:#26233a">&gt;</b><b style="left:1428.92px;color:#26233a">New</b><b style="left:1505.92px;color:#26233a">&lt;</b><b style="left:1560.92px;color:#26233a">&gt;</b><b style="left:1582.92px;color:#26233a">Focus</b><b style="left:1681.92px;color:#26233a">&lt;</b><b style="left:1692.92px;color:#eb6f92">+-</b><b style="left:1714.92px;color:#26233a">&gt;</b><b style="left:1736.92px;color:#26233a">Resize</b><b style="left:1846.92px;color:#26233a">&lt;</b><b style="left:1857.92px;color:#eb6f92">f</b><b style="left:1868.92px;color:#26233a">&gt;</b><b style="left:1890.92px;color:#26233a">Floating</b></div>
<svg class="a" style="left:1594px;top:929px" width="22" height="26" viewBox="0 0 22 26"><path d="M16 9.6H6.2L12.4 19.8" fill="none" stroke="#26233a" stroke-width="0.9"/></svg></div>
</body></html>
